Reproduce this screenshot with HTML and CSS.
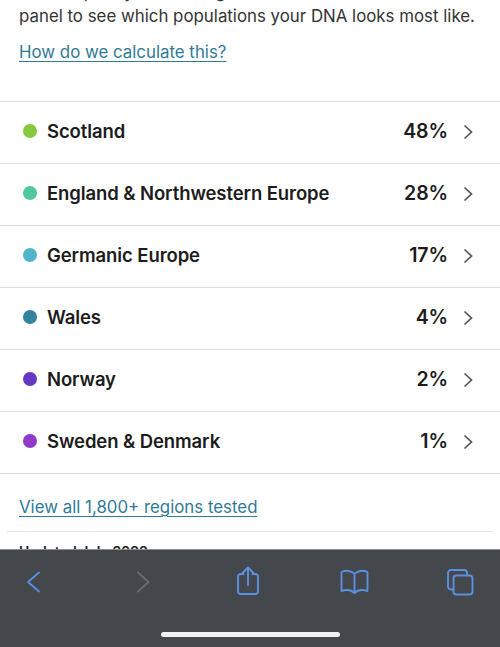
FILE: index.html
```html
<!DOCTYPE html>
<html lang="en">
<head>
<meta charset="utf-8">
<title>Ancestry composition</title>
<link rel="stylesheet" href="styles.css">
</head>
<body>
<div class="page">
  <main class="content">
    <div class="intro">
      <p class="lead">We compare your DNA against a worldwide reference<br>panel to see which populations your DNA looks most like.</p>
      <a class="link calc" href="#">How do we calculate this?</a>
    </div>
    <ul class="regions">
      <li class="region"><span class="dot c1"></span><span class="name">Scotland</span><span class="pct">48%</span><svg class="chev" viewBox="0 0 10 16"><path d="M1.500 1.500 8.500 8 1.500 14.500"/></svg></li>
      <li class="region"><span class="dot c2"></span><span class="name">England &amp; Northwestern Europe</span><span class="pct">28%</span><svg class="chev" viewBox="0 0 10 16"><path d="M1.500 1.500 8.500 8 1.500 14.500"/></svg></li>
      <li class="region"><span class="dot c3"></span><span class="name">Germanic Europe</span><span class="pct">17%</span><svg class="chev" viewBox="0 0 10 16"><path d="M1.500 1.500 8.500 8 1.500 14.500"/></svg></li>
      <li class="region"><span class="dot c4"></span><span class="name">Wales</span><span class="pct">4%</span><svg class="chev" viewBox="0 0 10 16"><path d="M1.500 1.500 8.500 8 1.500 14.500"/></svg></li>
      <li class="region"><span class="dot c5"></span><span class="name">Norway</span><span class="pct">2%</span><svg class="chev" viewBox="0 0 10 16"><path d="M1.500 1.500 8.500 8 1.500 14.500"/></svg></li>
      <li class="region"><span class="dot c6"></span><span class="name">Sweden &amp; Denmark</span><span class="pct">1%</span><svg class="chev" viewBox="0 0 10 16"><path d="M1.500 1.500 8.500 8 1.500 14.500"/></svg></li>
    </ul>
    <div class="all"><a class="link" href="#">View all 1,800+ regions tested</a></div>
    <div class="updated">Updated July 2023</div>
  </main>
  <nav class="toolbar">
    <div class="tools">
      <svg class="tool" viewBox="0 0 30 30"><path d="M21 6.500 10 16 21 25.500"/></svg>
      <svg class="tool dim" viewBox="0 0 30 30"><path d="M10 6.500 20.500 16 10 25.500"/></svg>
      <svg class="tool" viewBox="0 0 30 30"><path d="M10.500 8H8a3 3 0 0 0-3 3v14a3 3 0 0 0 3 3h14a3 3 0 0 0 3-3V11a3 3 0 0 0-3-3h-2.500M15 19V2M10 6.500 15 1.500 20 6.500"/></svg>
      <svg class="tool" viewBox="0 0 30 30"><path d="M15.500 8C13 4.500 7 4 2.500 6V25C7 23.500 12 23.500 15.500 27 19 23.500 24 23.500 28.500 25V6C24 4 18 4.500 15.500 8ZM15.500 8V26"/></svg>
      <svg class="tool" viewBox="0 0 30 30"><path d="M8.500 23.500H6a3 3 0 0 1-3-3V7a3 3 0 0 1 3-3h13a3 3 0 0 1 3 3v2.500"/><rect x="8.500" y="9.500" width="19" height="19" rx="3"/></svg>
    </div>
    <div class="home"></div>
  </nav>
</div>
</body>
</html>
```
FILE: styles.css
```css
* { box-sizing: border-box; }
html, body { margin: 0; padding: 0; }
body { background: #fff; font-family: Inter, "Liberation Sans", sans-serif; }
.page { width: 500px; height: 647px; overflow: hidden; display: flex; flex-direction: column; }
.content { height: 549px; overflow: hidden; flex: none; }
.intro { height: 101px; padding: 0 19px; overflow: hidden; }
.lead { margin: -20px 0 0; font-size: 16.850px; line-height: 24px; color: #333; white-space: nowrap; }
.link { color: #2f7a98; text-decoration: underline; text-underline-offset: 3px; text-decoration-thickness: 1px; font-size: 16.850px; }
.calc { display: block; margin-top: 12px; line-height: 24px; }
.regions { list-style: none; margin: 0; padding: 0; border-top: 1px solid #dedede; }
.region { height: 62px; display: flex; align-items: center; padding: 0 27px 3px 23px; border-bottom: 1px solid #dedede; }
.dot { width: 14px; height: 14px; border-radius: 50%; flex: none; margin-right: 10px; }
.c1 { background: #85c93e; }
.c2 { background: #50c79c; }
.c3 { background: #4fb5cb; }
.c4 { background: #34829f; }
.c5 { background: #6637c4; }
.c6 { background: #8f3bc9; }
.name { flex: 1; font-size: 18.500px; font-weight: 600; color: #1c1c1c; letter-spacing: -0.1px; }
.pct { font-size: 19.500px; font-weight: 600; color: #1c1c1c; margin-right: 15px; letter-spacing: -0.1px; }
.chev { width: 10px; height: 16px; margin-top: 2px; fill: none; stroke: #555; stroke-width: 1.700; }
.all { margin: 0 7px; padding: 21px 12px 0; height: 58px; border-bottom: 1px solid #e6e6e6; line-height: 24px; }
.updated { padding: 11px 19px 0; font-size: 14px; font-weight: 600; color: #1c1c1c; line-height: 18px; }
.toolbar { flex: 1; background: #44474b; border-top: 1px solid #8d8e90; position: relative; }
.tools { display: grid; grid-template-columns: 110px 105px 106px 106px 30px; padding: 16px 0 0 18px; }
.tool { width: 30px; height: 30px; fill: none; stroke: #5b8fe0; stroke-width: 1.900; stroke-linecap: round; stroke-linejoin: round; }
.tool.dim { stroke: #676a6f; }
.home { position: absolute; left: 161px; top: 82px; width: 179px; height: 5px; border-radius: 3px; background: #f0f0f0; }
```
